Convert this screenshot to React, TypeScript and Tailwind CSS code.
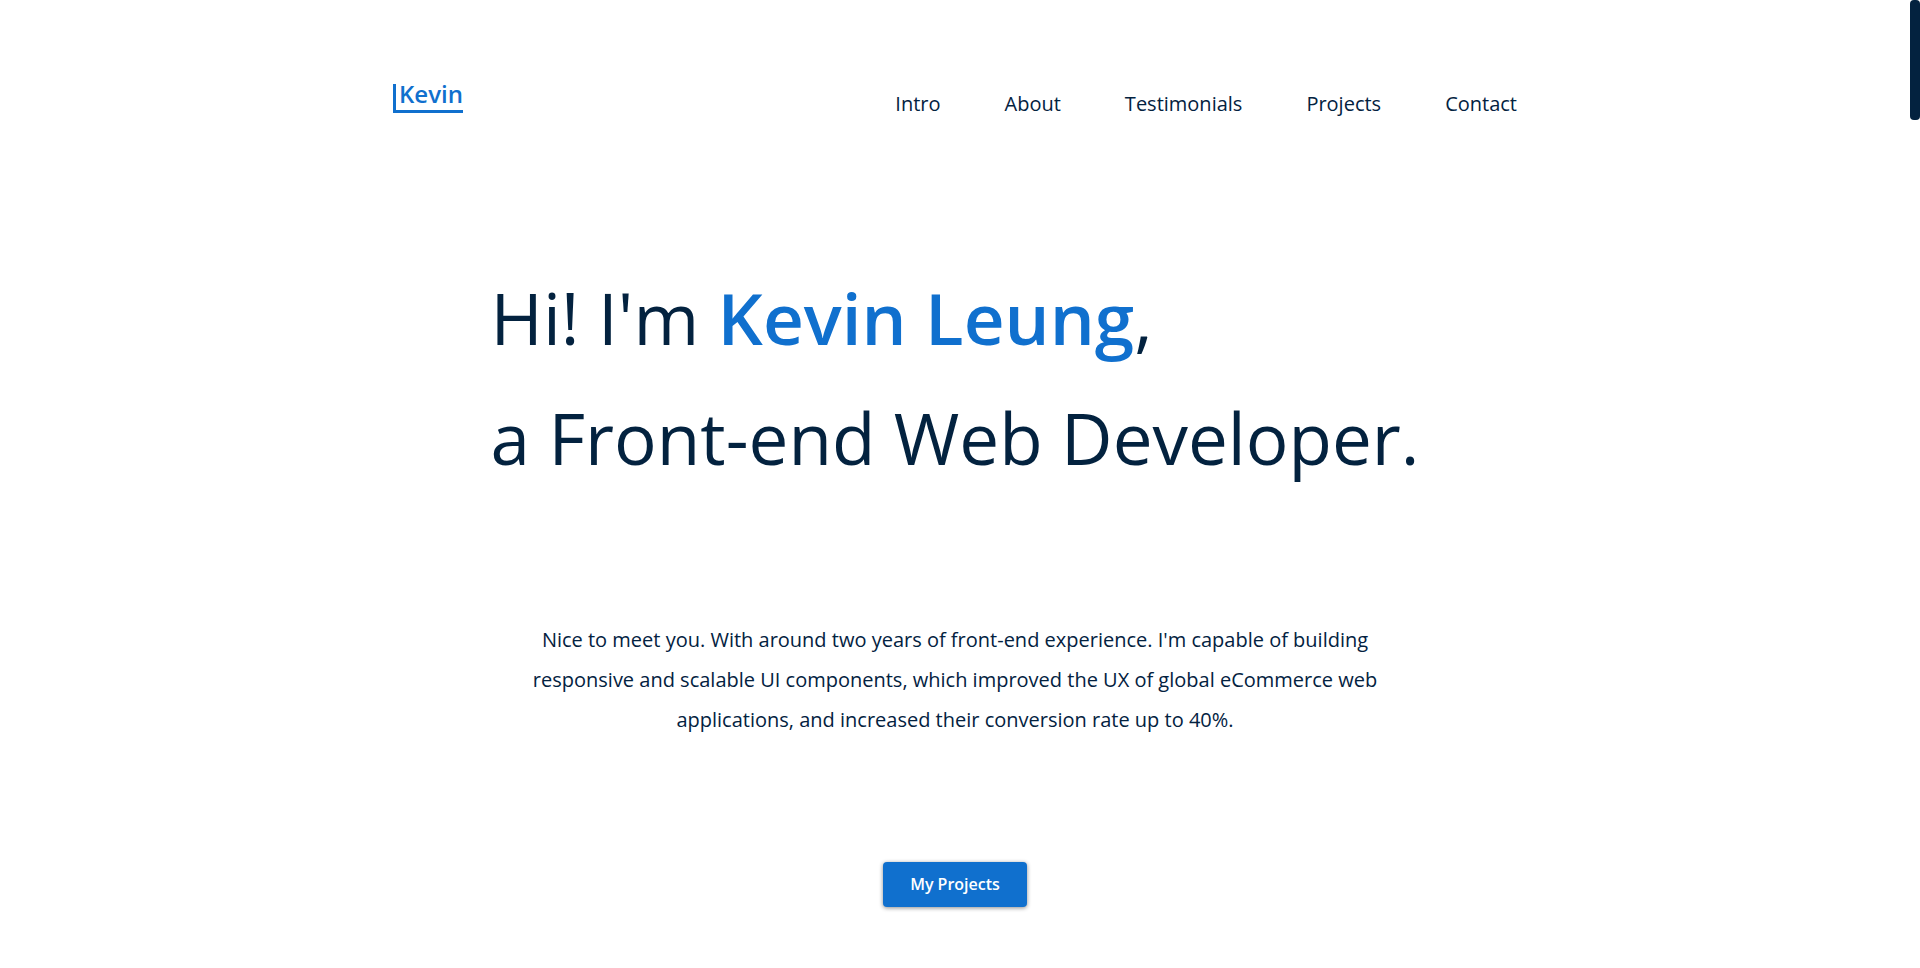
const links = ["Intro", "About", "Testimonials", "Projects", "Contact"];

export default function App() {
  return (
    <div className="flex min-h-screen items-start bg-white font-['Open_Sans',sans-serif] text-[#03223f]">
      <div className="flex min-w-0 flex-1 flex-col items-center">
        <header className="flex w-full max-w-[1124px] items-start justify-between pt-20">
          <a href="#intro" className="mt-1 border-b-3 border-l-3 border-[#1070ce] pb-[6px] pl-[3px] text-2xl leading-5 font-semibold text-[#1070ce]">
            Kevin
          </a>
          <nav className="flex gap-16 pt-2">
            {links.map((link) => (
              <a key={link} href={`#${link.toLowerCase()}`} className="text-xl leading-8">
                {link}
              </a>
            ))}
          </nav>
        </header>
        <main className="flex flex-col items-center pt-[138px]">
          <h1 className="text-[71px] leading-[120px]">
            Hi! I'm <span className="font-semibold text-[#1070ce]">Kevin Leung</span>,
            <br />a Front-end Web Developer.
          </h1>
          <p className="mt-[122px] max-w-[860px] text-center text-xl leading-10">
            Nice to meet you. With around two years of front-end experience. I'm capable of building responsive and
            scalable UI components, which improved the UX of global eCommerce web applications, and increased their
            conversion rate up to 40%.
          </p>
          <button type="button" className="mt-[122px] rounded bg-[#1070ce] px-[27px] py-3 text-base leading-[21px] font-semibold text-white shadow-[0_1px_4px_rgba(0,0,0,0.45)]">
            My Projects
          </button>
        </main>
      </div>
      <div className="h-[120px] w-[10px] rounded bg-[#03223f]" />
    </div>
  );
}
